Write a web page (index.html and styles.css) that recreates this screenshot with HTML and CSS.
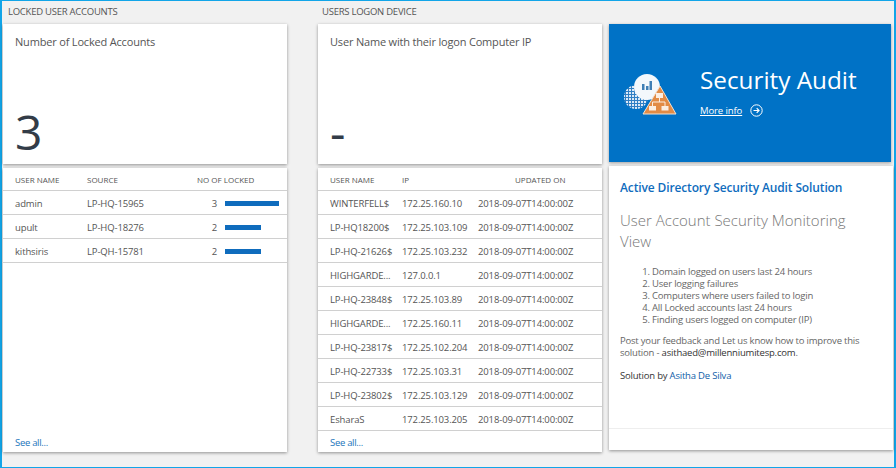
FILE: index.html
```html
<!DOCTYPE html>
<html lang="en">
<head>
<meta charset="utf-8">
<title>Security Audit</title>
<link rel="stylesheet" href="styles.css">
</head>
<body>
<div class="frame">
  <section class="col col-a">
    <h2 class="caption">LOCKED USER ACCOUNTS</h2>
    <div class="card tile">
      <div class="tile-title">Number of Locked Accounts</div>
      <div class="tile-num">3</div>
    </div>
    <div class="card list">
      <div class="row head a-grid"><span>USER NAME</span><span>SOURCE</span><span class="locked-head">NO OF LOCKED</span></div>
      <div class="row a-grid"><span>admin</span><span>LP-HQ-15965</span><span class="count">3</span><span class="bar bar-full"></span></div>
      <div class="row a-grid"><span>upult</span><span>LP-HQ-18276</span><span class="count">2</span><span class="bar bar-two"></span></div>
      <div class="row a-grid"><span>kithsiris</span><span>LP-QH-15781</span><span class="count">2</span><span class="bar bar-two"></span></div>
      <a class="see-all" href="#">See all...</a>
    </div>
  </section>

  <section class="col col-b">
    <h2 class="caption">USERS LOGON DEVICE</h2>
    <div class="card tile">
      <div class="tile-title">User Name with their logon Computer IP</div>
      <div class="tile-num">-</div>
    </div>
    <div class="card list">
      <div class="row head b-grid"><span>USER NAME</span><span>IP</span><span class="updated-head">UPDATED ON</span></div>
      <div class="row b-grid"><span>WINTERFELL$</span><span>172.25.160.10</span><span>2018-09-07T14:00:00Z</span></div>
      <div class="row b-grid"><span>LP-HQ18200$</span><span>172.25.103.109</span><span>2018-09-07T14:00:00Z</span></div>
      <div class="row b-grid"><span>LP-HQ-21626$</span><span>172.25.103.232</span><span>2018-09-07T14:00:00Z</span></div>
      <div class="row b-grid"><span>HIGHGARDE...</span><span>127.0.0.1</span><span>2018-09-07T14:00:00Z</span></div>
      <div class="row b-grid"><span>LP-HQ-23848$</span><span>172.25.103.89</span><span>2018-09-07T14:00:00Z</span></div>
      <div class="row b-grid"><span>HIGHGARDE...</span><span>172.25.160.11</span><span>2018-09-07T14:00:00Z</span></div>
      <div class="row b-grid"><span>LP-HQ-23817$</span><span>172.25.102.204</span><span>2018-09-07T14:00:00Z</span></div>
      <div class="row b-grid"><span>LP-HQ-22733$</span><span>172.25.103.31</span><span>2018-09-07T14:00:00Z</span></div>
      <div class="row b-grid"><span>LP-HQ-23802$</span><span>172.25.103.129</span><span>2018-09-07T14:00:00Z</span></div>
      <div class="row b-grid"><span>EsharaS</span><span>172.25.103.205</span><span>2018-09-07T14:00:00Z</span></div>
      <a class="see-all" href="#">See all...</a>
    </div>
  </section>

  <section class="col col-c">
    <div class="hero">
      <svg class="hero-icon" width="56" height="44" viewBox="0 0 56 44" aria-hidden="true">
        <defs>
          <pattern id="mesh" width="3" height="3" patternUnits="userSpaceOnUse">
            <rect width="3" height="3" fill="#dbe9f6"/>
            <rect width="1" height="3" fill="#2f7fc4"/>
            <rect width="3" height="1" fill="#2f7fc4"/>
          </pattern>
        </defs>
        <circle cx="14" cy="24" r="12" fill="url(#mesh)"/>
        <circle cx="25" cy="14" r="13" fill="#f3f8fc"/>
        <rect x="20" y="11" width="2.500" height="6" fill="#3f7fb5"/>
        <rect x="24" y="13" width="2.500" height="4" fill="#3f7fb5"/>
        <rect x="27.500" y="8" width="2.500" height="9" fill="#3f7fb5"/>
        <path d="M38 13 L54 41 L21 41 Z" fill="#e28b45" stroke="#f3e2d2" stroke-width="1" stroke-linejoin="round"/>
        <rect x="34" y="20" width="7" height="5" fill="#fbeee2"/>
        <rect x="27" y="33" width="7" height="4.500" fill="#fbeee2"/>
        <rect x="39.500" y="33" width="7" height="4.500" fill="#fbeee2"/>
        <path d="M37.500 25v4M30.500 33v-4h12.500v4" fill="none" stroke="#fbeee2" stroke-width="1"/>
      </svg>
      <div class="hero-text">
        <div class="hero-title">Security Audit</div>
        <div class="hero-link">
          <a href="#">More info</a>
          <svg width="13" height="13" viewBox="0 0 13 13" aria-hidden="true">
            <circle cx="6.500" cy="6.500" r="5.700" fill="none" stroke="#fff" stroke-width="1"/>
            <path d="M3.500 6.500h5.500M6.700 4.200l2.300 2.300-2.300 2.300" fill="none" stroke="#fff" stroke-width="1.200"/>
          </svg>
        </div>
      </div>
    </div>
    <div class="card info">
      <div class="info-body">
        <h3 class="info-title">Active Directory Security Audit Solution</h3>
        <h4 class="info-sub">User Account Security Monitoring View</h4>
        <ol class="info-list">
          <li>Domain logged on users last 24 hours</li>
          <li>User logging failures</li>
          <li>Computers where users failed to login</li>
          <li>All Locked accounts last 24 hours</li>
          <li>Finding users logged on computer (IP)</li>
        </ol>
        <p class="info-p">Post your feedback and Let us know how to improve this solution - <span class="dark">asithaed@millenniumitesp.com</span>.</p>
        <p class="info-p dark">Solution by <a href="#">Asitha De Silva</a></p>
      </div>
      <div class="info-foot"></div>
    </div>
  </section>
</div>
</body>
</html>
```

FILE: styles.css
```css
* { box-sizing: border-box; }
html, body { margin: 0; padding: 0; }
body {
  width: 896px;
  height: 468px;
  overflow: hidden;
  font-family: "Open Sans", "Noto Sans", sans-serif;
  color: #555;
}
.frame {
  width: 896px;
  height: 468px;
  background: #f1f1f1;
  border: 1px solid #12a5e8;
  border-left-width: 2px;
  border-right-width: 2px;
  padding: 1px 0 0 1px;
  display: flex;
  align-items: flex-start;
}
.col { display: flex; flex-direction: column; }
.col-a { width: 284px; margin-right: 31px; }
.col-b { width: 284px; margin-right: 7px; }
.col-c { width: 284px; padding-top: 22px; }
.caption {
  margin: 0;
  height: 22px;
  padding: 3px 0 0 5px;
  font-size: 9.5px;
  line-height: 13px;
  font-weight: 400;
  color: #555;
  letter-spacing: -0.25px;
}
.col-b .caption { padding-left: 4px; }
.card {
  background: #fff;
  box-shadow: 0 1px 3px rgba(0,0,0,.4);
}
.tile {
  height: 140px;
  padding: 10px 12px 0;
  display: flex;
  flex-direction: column;
  justify-content: space-between;
}
.tile-title { font-size: 11px; line-height: 15px; color: #555; letter-spacing: -0.18px; }
.tile-num {
  font-size: 48px;
  line-height: 64px;
  color: #333c48;
}
.list {
  margin-top: 4px;
  height: 284px;
  display: flex;
  flex-direction: column;
}
.row {
  height: 24px;
  display: grid;
  align-items: center;
  border-bottom: 1px solid #d0d0d0;
  font-size: 9.5px;
  letter-spacing: -0.13px;
  color: #555;
  padding: 1px 0 0 12px;
  white-space: nowrap;
}
.head { height: 23px; padding-top: 0; font-size: 8px; letter-spacing: 0; }
.a-grid { grid-template-columns: 72px 108px 30px 54px; }
.b-grid { grid-template-columns: 72px 76px 100px; }
.locked-head { grid-column: 3 / span 2; margin-left: 2px; }
.updated-head { margin-left: 37px; }
.count { text-align: right; padding-right: 8px; }
.bar { height: 5px; background: #0f6cbd; display: block; }
.bar-full { width: 54px; }
.bar-two { width: 36px; }
.see-all {
  margin-top: auto;
  padding: 0 0 3px 12px;
  font-size: 9.5px;
  line-height: 13px;
  letter-spacing: -0.3px;
  color: #1b75bb;
  text-decoration: none;
}
.hero {
  width: 282px;
  height: 138px;
  background: #0072c6;
  box-shadow: 0 1px 3px rgba(0,0,0,.35);
  display: flex;
  align-items: flex-start;
  color: #fff;
}
.hero-icon { margin: 49px 0 0 13px; flex: none; }
.hero-text { margin: 0 0 0 22px; padding-top: 39px; }
.hero-title { font-size: 24.3px; line-height: 34px; font-weight: 400; color: #fff; }
.hero-link { display: flex; align-items: center; gap: 8px; margin-top: 7px; font-size: 9.5px; letter-spacing: -0.1px; }
.hero-link a { color: #fff; }
.info {
  margin-top: 4px;
  height: 284px;
  display: flex;
  flex-direction: column;
}
.info-body { flex: 1; padding: 14px 14px 0 11px; font-size: 9.5px; line-height: 12px; color: #666; letter-spacing: -0.2px; }
.info-title { margin: 0; font-size: 12px; line-height: 16px; font-weight: 600; letter-spacing: -0.13px; color: #0f6cbd; }
.info-sub { margin: 14px 0 0; font-size: 15px; line-height: 21px; font-weight: 300; letter-spacing: 0; color: #777; }
.info-list { margin: 14px 0 0; padding-left: 32px; }
.info-p { margin: 9px 0 0; }
.info-p + .info-p { margin-top: 11px; }
.dark { color: #333; }
.info-p a { color: #0f5ea8; text-decoration: none; }
.info-foot { height: 22px; border-top: 1px solid #eee; }
```
